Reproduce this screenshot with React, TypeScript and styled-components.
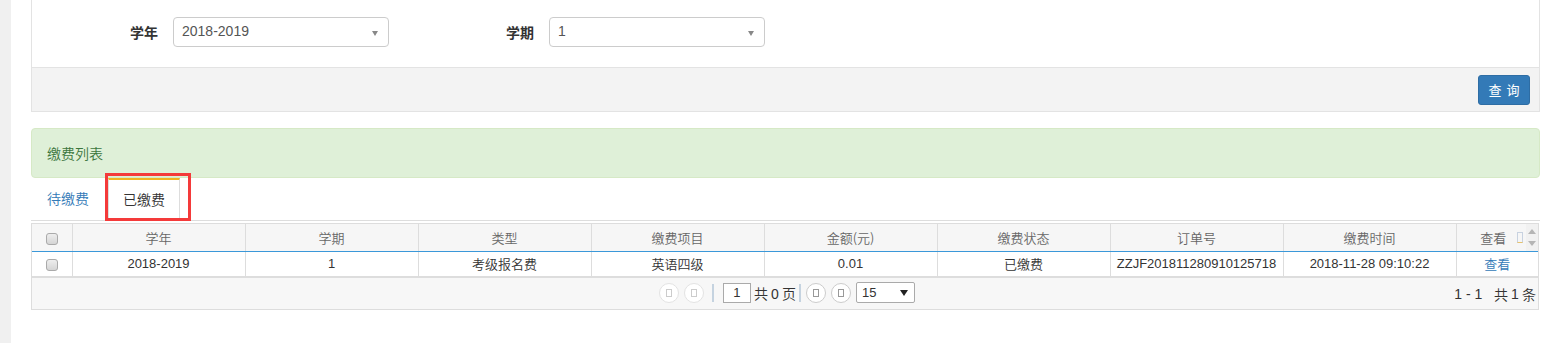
import React from "react";
import styled, { createGlobalStyle } from "styled-components";

const Global = createGlobalStyle`
  html, body { margin: 0; padding: 0; background: #fff; }
  body { font-family: "Liberation Sans", "Noto Sans CJK SC", sans-serif; font-size: 13px; color: #333; }
  * { box-sizing: border-box; }
`;

const Page = styled.div`
  display: flex;
  width: 1548px;
  height: 343px;
  overflow: hidden;
`;

const SideStrip = styled.div`
  width: 11px;
  flex: none;
  background: #f0f0f0;
`;

const Main = styled.div`
  flex: 1;
  padding: 0 8px 0 20px;
  display: flex;
  flex-direction: column;
`;

const Panel = styled.div`
  border: 1px solid #e3e3e3;
  border-top: none;
  background: #fff;
`;

const FormBody = styled.div`
  height: 67px;
  padding-top: 17px;
  display: flex;
  align-items: flex-start;
`;

const Field = styled.div<{ $labelWidth: number }>`
  display: flex;
  align-items: center;
  width: ${(p) => p.$labelWidth + 216}px;
  & > label {
    width: ${(p) => p.$labelWidth}px;
    padding-right: 15px;
    text-align: right;
    font-weight: bold;
    font-size: 14px;
    color: #333;
    font-family: "Noto Sans CJK SC", sans-serif;
  }
`;

const Select = styled.div`
  width: 216px;
  height: 30px;
  border: 1px solid #ccc;
  border-radius: 4px;
  padding: 0 10px 0 8px;
  display: flex;
  align-items: center;
  justify-content: space-between;
  font-size: 14px;
  color: #555;
  line-height: 1;
  & span { margin-top: -3px; }
`;

const Caret = styled.i`
  width: 0;
  height: 0;
  border-left: 3.5px solid transparent;
  border-right: 3.5px solid transparent;
  border-top: 5px solid #888;
  margin-top: 2px;
`;

const PanelFooter = styled.div`
  height: 44px;
  background: #f3f3f3;
  border-top: 1px solid #e3e3e3;
  display: flex;
  align-items: center;
  justify-content: flex-end;
  padding-right: 9px;
`;

const PrimaryButton = styled.button`
  width: 52px;
  height: 30px;
  background: #337ab7;
  border: 1px solid #2e6da4;
  border-radius: 3px;
  color: #fff;
  font-size: 13px;
  letter-spacing: 5px;
  padding: 0 0 0 5px;
  font-family: "Noto Sans CJK SC", sans-serif;
`;

const Alert = styled.div`
  margin-top: 16px;
  height: 50px;
  background: #dff0d8;
  border: 1px solid #d6e9c6;
  border-radius: 4px;
  color: #3c763d;
  display: flex;
  align-items: center;
  padding: 0 0 0 15px;
  font-size: 14px;
  font-weight: 350;
  font-family: "Noto Sans CJK SC", sans-serif;
`;

const Tabs = styled.div`
  display: flex;
  align-items: flex-end;
  height: 43px;
  border-bottom: 1px solid #ddd;
  padding-left: 6px;
`;

const Tab = styled.div<{ $active?: boolean }>`
  position: relative;
  height: ${(p) => (p.$active ? 43 : 41)}px;
  padding: 0 ${(p) => (p.$active ? 14 : 10)}px 4px;
  margin-right: 9px;
  display: flex;
  align-items: center;
  font-size: 14px;
  font-weight: 350;
  font-family: "Noto Sans CJK SC", sans-serif;
  color: ${(p) => (p.$active ? "#333" : "#337ab7")};
  background: #fff;
  border: ${(p) => (p.$active ? "1px solid #ddd" : "none")};
  border-top: ${(p) => (p.$active ? "2px solid #f0b323" : "none")};
  border-bottom: none;
  margin-bottom: ${(p) => (p.$active ? -1 : 0)}px;
`;

const Highlight = styled.div`
  position: absolute;
  left: -4px;
  top: -7px;
  width: 86px;
  height: 48px;
  border: 3px solid #f43a3a;
  pointer-events: none;
`;

const Grid = styled.div`
  margin-top: 2px;
  width: 1508px;
  border: 1px solid #ddd;
`;

const Table = styled.table`
  border-collapse: collapse;
  table-layout: fixed;
  width: 1506px;
`;

const Th = styled.th`
  height: 27px;
  background: #f6f6f6;
  border-right: 1px solid #ddd;
  border-bottom: 1px solid #3b98d9;
  font-weight: 350;
  color: #666;
  font-size: 13px;
  font-family: "Noto Sans CJK SC", sans-serif;
  padding: 0;
  text-align: center;
  position: relative;
  &:last-child { border-right: none; }
`;

const Td = styled.td`
  height: 25px;
  border-right: 1px solid #ddd;
  text-align: center;
  font-size: 13px;
  color: #333;
  padding: 0;
  white-space: nowrap;
  &:last-child { border-right: none; }
`;

const Cn = styled.span`
  font-family: "Noto Sans CJK SC", sans-serif;
  font-weight: 350;
`;

const LinkText = styled.a`
  color: #337ab7;
  font-family: "Noto Sans CJK SC", sans-serif;
  font-weight: 350;
  text-decoration: none;
`;

const Check = styled.span`
  display: inline-block;
  width: 12px;
  height: 12px;
  border: 1px solid #aaa;
  border-radius: 3px;
  background: linear-gradient(#eee, #d5d5d5);
  vertical-align: middle;
`;

const HeadTools = styled.span`
  position: absolute;
  right: 0;
  top: 0;
  height: 27px;
  display: flex;
  align-items: center;
  gap: 3px;
`;

const MiniIcon = styled.span`
  width: 6px;
  height: 11px;
  border: 1px solid #c8d2e0;
  border-bottom-color: #e7c36d;
  display: inline-block;
`;

const Scroll = styled.span`
  width: 12px;
  height: 27px;
  background: #f1f1f1;
  display: flex;
  flex-direction: column;
  align-items: center;
  justify-content: space-between;
  padding: 5px 0;
  & i {
    width: 0;
    height: 0;
    border-left: 4px solid transparent;
    border-right: 4px solid transparent;
  }
  & i.up { border-bottom: 5px solid #b5b5b5; }
  & i.down { border-top: 5px solid #b5b5b5; }
`;

const GridFooter = styled.div`
  border-top: 2px solid #ddd;
  background: #f7f7f7;
  height: 33px;
  display: flex;
  align-items: center;
  position: relative;
  padding-bottom: 2px;
`;

const Pager = styled.div`
  flex: 1;
  display: flex;
  align-items: center;
  justify-content: center;
  padding-left: 4px;
  font-family: "Noto Sans CJK SC", sans-serif;
  font-weight: 350;
  font-size: 13px;
  color: #333;
`;

const RoundBtn = styled.span<{ $disabled?: boolean; $gap?: number }>`
  width: 20px;
  height: 20px;
  margin-right: ${(p) => p.$gap ?? 5}px;
  border-radius: 50%;
  border: 1px solid ${(p) => (p.$disabled ? "#e3e3e3" : "#ccc")};
  background: #fff;
  display: inline-flex;
  align-items: center;
  justify-content: center;
  &::after {
    content: "";
    width: 4px;
    height: 6px;
    border: 1px solid ${(p) => (p.$disabled ? "#ccc" : "#999")};
  }
`;

const Sep = styled.span<{ $gap: number }>`
  width: 2px;
  height: 18px;
  background: #c5d3e0;
  margin-right: ${(p) => p.$gap}px;
`;

const PageInput = styled.span`
  width: 28px;
  height: 20px;
  margin-right: 3px;
  border: 1px solid #aaa;
  background: #fff;
  display: inline-flex;
  align-items: center;
  justify-content: center;
  font-family: "Liberation Sans", sans-serif;
  font-size: 13px;
`;

const PageText = styled.span`
  margin-right: 3px;
  white-space: pre;
  font-size: 14px;
`;

const SizeSelect = styled.span`
  width: 59px;
  height: 21px;
  border: 1px solid #aaa;
  border-radius: 2px;
  background: #fff;
  display: inline-flex;
  align-items: center;
  justify-content: space-between;
  padding: 0 6px 0 5px;
  font-family: "Liberation Sans", sans-serif;
  font-size: 13px;
  & i {
    width: 0;
    height: 0;
    border-left: 4px solid transparent;
    border-right: 4px solid transparent;
    border-top: 6px solid #222;
  }
`;

const Summary = styled.div`
  position: absolute;
  right: 2px;
  top: 0;
  height: 31px;
  display: flex;
  align-items: center;
  font-family: "Noto Sans CJK SC", sans-serif;
  font-weight: 350;
  font-size: 14px;
  color: #333;
  white-space: pre;
`;

const Num = styled.span`
  font-family: "Liberation Sans", sans-serif;
`;

const cols = [40, 173, 173, 173, 173, 173, 173, 173, 173, 82];
const heads = ["学年", "学期", "类型", "缴费项目", "金额(元)", "缴费状态", "订单号", "缴费时间"];

export default function App() {
  return (
    <Page>
      <Global />
      <SideStrip />
      <Main>
        <Panel>
          <FormBody>
            <Field $labelWidth={141}>
              <label>学年</label>
              <Select>
                <span>2018-2019</span>
                <Caret />
              </Select>
            </Field>
            <Field $labelWidth={160}>
              <label>学期</label>
              <Select>
                <span>1</span>
                <Caret />
              </Select>
            </Field>
          </FormBody>
          <PanelFooter>
            <PrimaryButton>查询</PrimaryButton>
          </PanelFooter>
        </Panel>

        <Alert>缴费列表</Alert>

        <Tabs>
          <Tab>待缴费</Tab>
          <Tab $active>
            已缴费
            <Highlight />
          </Tab>
        </Tabs>

        <Grid>
          <Table>
            <colgroup>
              {cols.map((w, i) => (
                <col key={i} style={{ width: w }} />
              ))}
            </colgroup>
            <thead>
              <tr>
                <Th>
                  <Check />
                </Th>
                {heads.map((h) => (
                  <Th key={h}>{h}</Th>
                ))}
                <Th>
                  <span style={{ marginRight: 8 }}>查看</span>
                  <HeadTools>
                    <MiniIcon />
                    <Scroll>
                      <i className="up" />
                      <i className="down" />
                    </Scroll>
                  </HeadTools>
                </Th>
              </tr>
            </thead>
            <tbody>
              <tr>
                <Td>
                  <Check />
                </Td>
                <Td>2018-2019</Td>
                <Td>1</Td>
                <Td>
                  <Cn>考级报名费</Cn>
                </Td>
                <Td>
                  <Cn>英语四级</Cn>
                </Td>
                <Td>0.01</Td>
                <Td>
                  <Cn>已缴费</Cn>
                </Td>
                <Td>ZZJF201811280910125718</Td>
                <Td>2018-11-28 09:10:22</Td>
                <Td>
                  <LinkText href="#">查看</LinkText>
                </Td>
              </tr>
            </tbody>
          </Table>
          <GridFooter>
            <Pager>
              <RoundBtn $disabled />
              <RoundBtn $disabled $gap={8} />
              <Sep $gap={9} />
              <PageInput>1</PageInput>
              <PageText>
                共 <Num>0</Num> 页
              </PageText>
              <Sep $gap={5} />
              <RoundBtn />
              <RoundBtn />
              <SizeSelect>
                15
                <i />
              </SizeSelect>
            </Pager>
            <Summary>
              <Num>{"1 - 1   "}</Num>共 <Num>1</Num> 条
            </Summary>
          </GridFooter>
        </Grid>
      </Main>
    </Page>
  );
}
